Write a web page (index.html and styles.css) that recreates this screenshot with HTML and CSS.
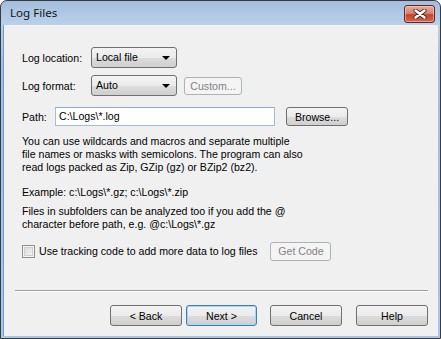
FILE: index.html
```html
<!DOCTYPE html>
<html lang="en">
<head>
    <meta charset="UTF-8">
    <meta name="viewport" content="width=device-width, initial-scale=1.0">
    <title>Log Files</title>
    <link rel="stylesheet" href="styles.css">
</head>
<body>

<div class="window">
    <div class="titlebar">
        <span class="title">Log Files</span>
        <div class="close-btn">
            <svg width="14" height="10" viewBox="0 0 14 10">
                <path d="M2.5 1.5 L11.5 8.5 M11.5 1.5 L2.5 8.5" stroke="#4a2a24" stroke-width="4.2" stroke-linecap="round"/>
                <path d="M2.5 1.5 L11.5 8.5 M11.5 1.5 L2.5 8.5" stroke="#ffffff" stroke-width="2.4" stroke-linecap="round"/>
            </svg>
        </div>
    </div>

    <div class="client">
        <!-- Log source settings -->
        <div class="row row-first">
            <span class="label label-wide">Log location:</span>
            <div class="combo">Local file<span class="arrow"></span></div>
        </div>
        <div class="row row-format">
            <span class="label label-wide">Log format:</span>
            <div class="combo">Auto<span class="arrow"></span></div>
            <div class="btn btn-disabled btn-custom">Custom...</div>
        </div>
        <div class="row row-path">
            <span class="label label-path">Path:</span>
            <div class="textbox">C:\Logs\*.log</div>
            <div class="btn btn-browse">Browse...</div>
        </div>

        <p class="note note-first">You can use wildcards and macros and separate multiple<br>file names or masks with semicolons. The program can also<br>read logs packed as Zip, GZip (gz) or BZip2 (bz2).</p>
        <p class="note note-example">Example: c:\Logs\*.gz; c:\Logs\*.zip</p>
        <p class="note note-sub">Files in subfolders can be analyzed too if you add the @<br>character before path, e.g. @c:\Logs\*.gz</p>

        <div class="row row-check">
            <span class="checkbox"></span>
            <span class="check-text">Use tracking code to add more data to log files</span>
            <div class="btn btn-disabled btn-code">Get Code</div>
        </div>

        <div class="separator"></div>

        <!-- Wizard buttons -->
        <div class="footer">
            <div class="btn btn-wizard">&lt; Back</div>
            <div class="btn btn-wizard btn-default">Next &gt;</div>
            <div class="btn btn-wizard btn-cancel">Cancel</div>
            <div class="btn btn-wizard btn-help">Help</div>
        </div>
    </div>
</div>

</body>
</html>
```

FILE: styles.css
```css
body {
    margin: 0;
    background-color: #ffffff;
    font-family: "Liberation Sans", Arial, sans-serif;
    font-size: 10.6px;
    color: #000;
}
.window {
    width: 441px;
    height: 339px;
    box-sizing: border-box;
    border: 1px solid #3b3b3b;
    border-radius: 7px 7px 0 0;
    background: linear-gradient(#a3bedd 0px, #b9d1ea 24px, #9fc0e4 60px, #a7c8ea 100%);
    padding: 0 2px 2px 2px;
    display: flex;
    flex-direction: column;
}
.titlebar {
    height: 24px;
    display: flex;
    justify-content: space-between;
    align-items: flex-start;
    padding: 0 3px 0 7px;
}
.title {
    font-family: "Noto Sans", sans-serif;
    font-size: 11.6px;
    color: #151515;
    margin-top: 4px;
}
.close-btn {
    width: 29px;
    height: 16px;
    margin-top: 4px;
    border: 1px solid #5e2a22;
    border-radius: 3px;
    background: linear-gradient(#e7a99c 0%, #d88672 45%, #c4432e 55%, #d3674f 100%);
    box-shadow: inset 0 0 0 1px rgba(255, 220, 210, 0.5);
    display: flex;
    align-items: center;
    justify-content: center;
}
.client {
    flex: 1;
    background-color: #f0f0f0;
    border-left: 1px solid #6f9bd0;
    display: flex;
    flex-direction: column;
    padding: 22px 10px 10px 18px;
}
.row {
    display: flex;
    align-items: center;
}
.row-first {
    height: 21px;
}
.row-format {
    height: 21px;
    margin-top: 7px;
}
.row-path {
    height: 19px;
    margin-top: 11px;
}
.label-wide {
    width: 69px;
}
.label-path {
    width: 33px;
}
.combo {
    position: relative;
    width: 86px;
    height: 21px;
    box-sizing: border-box;
    border: 1px solid #707070;
    border-radius: 3px;
    background: linear-gradient(#f3f3f3 0%, #ebebeb 50%, #dddddd 51%, #cfcfcf 100%);
    padding-left: 4px;
    line-height: 19px;
}
.arrow {
    position: absolute;
    right: 6px;
    top: 8px;
    width: 0;
    height: 0;
    border-left: 4px solid transparent;
    border-right: 4px solid transparent;
    border-top: 4px solid #000;
}
.btn {
    height: 19px;
    box-sizing: border-box;
    border: 1px solid #707070;
    border-radius: 3px;
    background: linear-gradient(#f3f3f3 0%, #ebebeb 50%, #dddddd 51%, #cfcfcf 100%);
    display: flex;
    align-items: center;
    justify-content: center;
}
.btn-disabled {
    border-color: #adb2b5;
    background: #f4f4f4;
    color: #838383;
}
.btn-custom {
    width: 58px;
    height: 18px;
    margin-left: 7px;
}
.textbox {
    width: 220px;
    height: 19px;
    box-sizing: border-box;
    border: 1px solid #a3bcd8;
    border-top-color: #8eabcf;
    background: #fff;
    padding-left: 3px;
    line-height: 17px;
}
.btn-browse {
    width: 62px;
    margin-left: 11px;
}
.note {
    margin: 0;
    line-height: 13px;
}
.note-first {
    margin-top: 9px;
}
.note-example {
    margin-top: 12px;
}
.note-sub {
    margin-top: 6px;
}
.row-check {
    height: 20px;
    margin-top: 10px;
}
.checkbox {
    width: 13px;
    height: 13px;
    box-sizing: border-box;
    border: 1px solid #8f8f8f;
    background: linear-gradient(135deg, #d6d6d6, #f8f8f8);
    box-shadow: inset 0 0 0 1px #f4f4f4, inset 0 0 0 2px #cfcfcf;
}
.check-text {
    margin-left: 4px;
}
.btn-code {
    width: 61px;
    margin-left: 13px;
}
.separator {
    margin: auto 0 0 -7px;
    width: 413px;
    border-top: 1px solid #a0a0a0;
    border-bottom: 1px solid #ffffff;
}
.footer {
    display: flex;
    justify-content: flex-end;
    margin-top: 13px;
}
.btn-wizard {
    width: 72px;
    height: 21px;
}
.btn-default {
    width: 71px;
    margin-left: 4px;
    border-color: #3c7fb1;
    box-shadow: inset 0 0 0 1px #a6d8f4;
}
.btn-cancel {
    margin-left: 13px;
}
.btn-help {
    margin-left: 14px;
}
```
